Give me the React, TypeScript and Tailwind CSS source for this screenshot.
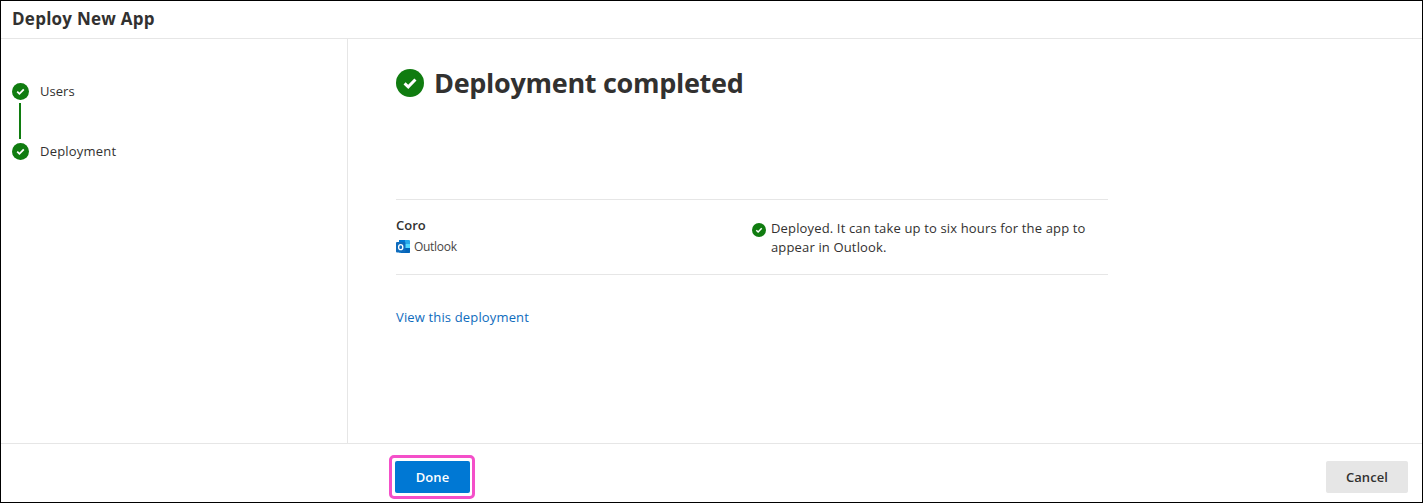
const font = { fontFamily: '"Open Sans", "Noto Sans", sans-serif' };

function CheckBadge({ size }: { size: number }) {
  return (
    <svg width={size} height={size} viewBox="0 0 16 16" className="shrink-0">
      <circle cx="8" cy="8" r="8" fill="#107c10" />
      <path d="M4.9 8.2 7 10.2 11.1 6" fill="none" stroke="#fff" strokeWidth="1.7" />
    </svg>
  );
}

function OutlookIcon() {
  return (
    <svg width="14" height="14" viewBox="0 0 14 14" className="shrink-0">
      <rect x="3" y="0" width="11" height="13" rx="1" fill="#28a8ea" />
      <rect x="3" y="0" width="6" height="4" fill="#0078d4" />
      <rect x="9" y="4" width="5" height="4" fill="#50d9ff" />
      <path d="M5 8h9v4a1 1 0 0 1-1 1H5z" fill="#0364b8" />
      <rect x="0" y="2" width="9.5" height="10.5" rx="1" fill="#0f6cbd" />
      <ellipse cx="4.7" cy="7.2" rx="2.1" ry="2.5" fill="none" stroke="#fff" strokeWidth="1.3" />
    </svg>
  );
}

export default function App() {
  return (
    <div style={font} className="w-[1423px] h-[503px] flex flex-col bg-white border border-black text-[#323130] overflow-hidden">
      <div className="h-[38px] shrink-0 flex items-center pl-[11px] pb-[1px] border-b border-[#e6e6e6]">
        <h1 className="text-[17px] font-bold tracking-[0.25px] text-[#323130]">Deploy New App</h1>
      </div>

      <div className="flex-1 flex min-h-0">
        <div className="w-[347px] shrink-0 border-r border-[#e6e6e6] pl-[11px] pt-[44px]">
          <div className="flex items-center gap-[11px] h-[16px]">
            <CheckBadge size={17} />
            <span className="text-[13px] pt-[1px] tracking-[0.05px]">Users</span>
          </div>
          <div className="w-[2px] h-[36px] bg-[#107c10] ml-[7px] my-[4px]" />
          <div className="flex items-center gap-[11px] h-[16px]">
            <CheckBadge size={17} />
            <span className="text-[13px] pt-[1px] tracking-[0.2px]">Deployment</span>
          </div>
        </div>

        <div className="flex-1 pl-[48px] pt-[29px]">
          <div className="flex items-center gap-[10px] h-[30px]">
            <CheckBadge size={28} />
            <h2 className="text-[27px] font-bold tracking-[-0.3px] text-[#323130]">Deployment completed</h2>
          </div>

          <div className="w-[712px] mt-[101px] border-t border-b border-[#e6e6e6] h-[76px] flex">
            <div className="w-[356px] pt-[16px]">
              <div className="text-[13px] font-semibold leading-[18px] tracking-[0px]">Coro</div>
              <div className="flex items-center gap-[4px] mt-[5px]">
                <OutlookIcon />
                <span className="text-[12px] leading-[16px] tracking-[-0.3px] text-[#484644]">Outlook</span>
              </div>
            </div>
            <div className="flex-1 flex items-start gap-[5px] pt-[19px]">
              <div className="mt-[4px]">
                <CheckBadge size={14} />
              </div>
              <p className="w-[330px] text-[13px] leading-[19px] tracking-[0.15px]">
                Deployed. It can take up to six hours for the app to appear in Outlook.
              </p>
            </div>
          </div>

          <a className="block mt-[33px] text-[13px] leading-[18px] tracking-[0.15px] text-[#0f6cbd]">View this deployment</a>
        </div>
      </div>

      <div className="h-[59px] shrink-0 border-t border-[#e6e6e6] flex items-start justify-between pl-[388px] pr-[14px] pt-[11px]">
        <div className="rounded-[5px] border-[3px] border-[#f44fc9] pl-[3px] pr-[2px] py-[3px]">
          <button className="block w-[75px] h-[32px] pt-[2px] rounded-[2px] bg-[#0078d4] text-white text-[13px] font-semibold tracking-[0.05px]">Done</button>
        </div>
        <button className="w-[82px] h-[32px] pt-[2px] mt-[6px] rounded-[2px] bg-[#e6e6e6] text-[13px] font-semibold tracking-[0.1px] text-[#323130]">Cancel</button>
      </div>
    </div>
  );
}
